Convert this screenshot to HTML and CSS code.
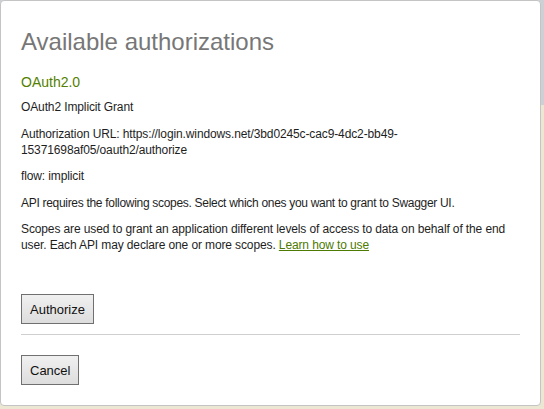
FILE: index.html
```html
<!DOCTYPE html>
<html>
<head>
<meta charset="utf-8">
<link rel="stylesheet" href="styles.css">
</head>
<body>
<div class="dialog">
  <h3 class="title">Available authorizations</h3>
  <div class="auth">
    <h3 class="key">OAuth2.0</h3>
    <p>OAuth2 Implicit Grant</p>
    <p>Authorization URL: https://login.windows.net/3bd0245c-cac9-4dc2-bb49-15371698af05/oauth2/authorize</p>
    <p>flow: implicit</p>
    <p class="scopes-intro">API requires the following scopes. Select which ones you want to grant to Swagger UI.</p>
    <p>Scopes are used to grant an application different levels of access to data on behalf of the end user. Each API may declare one or more scopes. <a href="#">Learn how to use</a></p>
    <div class="actions"><button class="btn">Authorize</button></div>
  </div>
  <hr class="sep">
  <div class="actions"><button class="btn">Cancel</button></div>
</div>
</body>
</html>
```

FILE: styles.css
```css
html, body {
  margin: 0;
  padding: 0;
}
body {
  width: 544px;
  height: 409px;
  overflow: hidden;
  background: linear-gradient(to bottom, #cdd1d5 0, #cdd1d5 105px, #ebe7d2 105px, #ebe7d2 100%);
  font-family: "Liberation Sans", Arial, sans-serif;
}
.dialog {
  box-sizing: border-box;
  width: 541px;
  height: 406px;
  background: #fff;
  border: 1px solid #c4c4c4;
  border-radius: 4px;
  padding: 27px 20px 20px 20px;
  color: #1e1e1e;
}
.title {
  margin: 0;
  font-size: 24px;
  line-height: 28px;
  font-weight: normal;
  color: #777;
}
.key {
  margin: 18px 0 9px 0;
  font-size: 14px;
  line-height: 16px;
  font-weight: normal;
  color: #547f00;
}
.auth p {
  margin: 0 0 10.5px 0;
  font-size: 12px;
  line-height: 16px;
  letter-spacing: -0.12px;
}
.auth .scopes-intro {
  letter-spacing: -0.3px;
}
.auth a {
  color: #4d7a00;
  text-decoration: underline;
}
.auth .actions {
  margin-top: 41px;
}
.actions {
  display: flex;
}
.btn {
  font-family: "Liberation Sans", Arial, sans-serif;
  font-size: 13px;
  color: #111;
  height: 30px;
  padding: 0 8px;
  border: 1px solid #707070;
  border-radius: 0;
  background: linear-gradient(to bottom, #f0f0f0, #dddddd);
}
.sep {
  margin: 10px 0 20px 0;
  border: 0;
  border-top: 1px solid #cfcfcf;
  height: 0;
}
```
